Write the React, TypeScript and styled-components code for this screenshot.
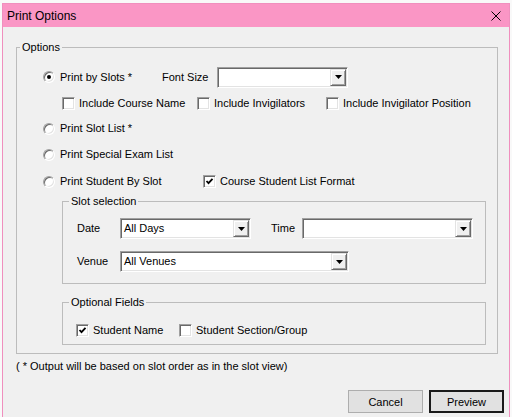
import styled, { createGlobalStyle, css } from "styled-components";

const GlobalStyle = createGlobalStyle`
  html, body {
    margin: 0;
    padding: 0;
  }
  body {
    background: #f9f9f9;
    font-family: "Liberation Sans", Arial, sans-serif;
    font-size: 11px;
    color: #000;
    overflow: hidden;
  }
`;

const Screen = styled.div`
  width: 512px;
  height: 417px;
  padding: 3px 0 0 2px;
  box-sizing: border-box;
  overflow: hidden;
`;

const Window = styled.div`
  width: 508px;
  height: 430px;
  box-sizing: border-box;
  border: 1px solid #f08fbe;
  border-bottom: none;
  background: #f0f0f0;
  display: flex;
  flex-direction: column;
`;

const TitleBar = styled.div`
  height: 23px;
  flex: none;
  background: #fa96c5;
  display: flex;
  align-items: center;
  justify-content: space-between;
  padding: 0 8px 0 4px;
  font-size: 12px;
`;

const CloseIcon = () => (
  <svg width="10" height="10" viewBox="0 0 10 10">
    <path d="M0.5 0.5 L9.5 9.5 M9.5 0.5 L0.5 9.5" stroke="#000" strokeWidth="1" fill="none" />
  </svg>
);

const Body = styled.div`
  padding: 14px 0 0 13px;
  display: flex;
  flex-direction: column;
`;

const GroupBox = styled.fieldset<{ $width?: number; $pl: number; $mt?: number }>`
  margin: ${(p) => p.$mt ?? 0}px 0 0 0;
  padding: 0 0 0 ${(p) => p.$pl}px;
  border: 1px solid #bcbcbc;
  min-width: 0;
  box-sizing: border-box;
  ${(p) =>
    p.$width &&
    css`
      width: ${p.$width}px;
    `}
`;

const Legend = styled.legend`
  padding: 0 2px;
  line-height: 13px;
`;

const GroupContent = styled.div<{ $pad: string }>`
  padding: ${(p) => p.$pad};
  display: flex;
  flex-direction: column;
`;

const Row = styled.div<{ $h: number; $indent?: number; $gap?: number }>`
  height: ${(p) => p.$h}px;
  padding-left: ${(p) => p.$indent ?? 0}px;
  margin-bottom: ${(p) => p.$gap ?? 0}px;
  display: flex;
  align-items: center;
`;

const Option = styled.label<{ $w?: number }>`
  display: flex;
  align-items: center;
  gap: 4px;
  line-height: 13px;
  white-space: nowrap;
  ${(p) =>
    p.$w &&
    css`
      width: ${p.$w}px;
      flex: none;
    `}
`;

const RadioCircle = styled.span<{ $on?: boolean }>`
  width: 12px;
  height: 12px;
  box-sizing: border-box;
  border-radius: 50%;
  border: 1px solid;
  border-color: #a0a0a0 #ffffff #ffffff #a0a0a0;
  box-shadow: inset 1px 1px 0 #696969, inset -1px -1px 0 #e3e3e3;
  background: #fff;
  display: flex;
  align-items: center;
  justify-content: center;
  margin-right: 1px;
  &::after {
    content: "";
    width: 4px;
    height: 4px;
    border-radius: 50%;
    background: ${(p) => (p.$on ? "#000" : "transparent")};
  }
`;

const CheckBox = styled.span`
  width: 13px;
  height: 13px;
  box-sizing: border-box;
  border: 1px solid;
  border-color: #a0a0a0 #ffffff #ffffff #a0a0a0;
  box-shadow: inset 1px 1px 0 #696969, inset -1px -1px 0 #e3e3e3;
  background: #fff;
  display: flex;
  align-items: center;
  justify-content: center;
`;

const Check = () => (
  <svg width="9" height="9" viewBox="0 0 9 9">
    <path d="M1.5 4 L3.5 6.2 L7.5 1.8" stroke="#000" strokeWidth="1.8" fill="none" />
  </svg>
);

const FieldLabel = styled.span<{ $w: number }>`
  width: ${(p) => p.$w}px;
  flex: none;
  line-height: 13px;
  white-space: nowrap;
`;

const ComboBox = styled.div<{ $w: number; $ml?: number }>`
  width: ${(p) => p.$w}px;
  height: 21px;
  margin-left: ${(p) => p.$ml ?? 0}px;
  flex: none;
  box-sizing: border-box;
  background: #fff;
  border: 1px solid;
  border-color: #a0a0a0 #ffffff #ffffff #a0a0a0;
  box-shadow: inset 1px 1px 0 #696969, inset -1px -1px 0 #e3e3e3;
  padding: 1px 1px 1px 3px;
  display: flex;
  align-items: center;
  justify-content: space-between;
`;

const ComboText = styled.span`
  line-height: 13px;
  white-space: nowrap;
`;

const DropButton = styled.span`
  width: 16px;
  height: 17px;
  box-sizing: border-box;
  background: #f0f0f0;
  border: 1px solid;
  border-color: #e3e3e3 #696969 #696969 #e3e3e3;
  box-shadow: inset 1px 1px 0 #ffffff, inset -1px -1px 0 #a0a0a0;
  display: flex;
  align-items: center;
  justify-content: center;
`;

const Arrow = () => (
  <svg width="7" height="4" viewBox="0 0 7 4">
    <polygon points="0,0 7,0 3.5,4" fill="#000" />
  </svg>
);

const Combo = ({ w, ml, value = "" }: { w: number; ml?: number; value?: string }) => (
  <ComboBox $w={w} $ml={ml}>
    <ComboText>{value}</ComboText>
    <DropButton>
      <Arrow />
    </DropButton>
  </ComboBox>
);

const Radio = ({ label, on, w }: { label: string; on?: boolean; w?: number }) => (
  <Option $w={w}>
    <RadioCircle $on={on} />
    {label}
  </Option>
);

const Checkbox = ({ label, on, w }: { label: string; on?: boolean; w?: number }) => (
  <Option $w={w}>
    <CheckBox>{on && <Check />}</CheckBox>
    {label}
  </Option>
);

const Footnote = styled.div`
  margin-top: 6px;
  line-height: 13px;
`;

const ButtonRow = styled.div`
  margin-top: 17px;
  padding-right: 5px;
  display: flex;
  justify-content: flex-end;
  gap: 6px;
`;

const PushButton = styled.button<{ $default?: boolean }>`
  width: 75px;
  height: 23px;
  padding: 0;
  box-sizing: border-box;
  background: #e1e1e1;
  border: 1px solid #adadad;
  font-family: "Liberation Sans", Arial, sans-serif;
  font-size: 11px;
  color: #000;
  ${(p) =>
    p.$default &&
    css`
      border: 2px solid #1a1a1a;
    `}
`;

export default function App() {
  return (
    <Screen>
      <GlobalStyle />
      <Window>
        <TitleBar>
          <span>Print Options</span>
          <CloseIcon />
        </TitleBar>
        <Body>
          <GroupBox $width={482} $pl={3}>
            <Legend>Options</Legend>
            <GroupContent $pad="10px 11px 8px 23px">
              <Row $h={26}>
                <Radio label="Print by Slots *" on w={119} />
                <FieldLabel $w={55}>Font Size</FieldLabel>
                <Combo w={131} />
              </Row>
              <Row $h={26} $indent={19}>
                <Checkbox label="Include Course Name" w={135} />
                <Checkbox label="Include Invigilators" w={129} />
                <Checkbox label="Include Invigilator Position" />
              </Row>
              <Row $h={25}>
                <Radio label="Print Slot List *" />
              </Row>
              <Row $h={27}>
                <Radio label="Print Special Exam List" />
              </Row>
              <Row $h={27}>
                <Radio label="Print Student By Slot" w={160} />
                <Checkbox label="Course Student List Format" on />
              </Row>
              <GroupBox $pl={6} style={{ marginLeft: 19 }}>
                <Legend>Slot selection</Legend>
                <GroupContent $pad="10px 0 11px 8px">
                  <Row $h={21} $gap={12}>
                    <FieldLabel $w={43}>Date</FieldLabel>
                    <Combo w={131} value="All Days" />
                    <FieldLabel $w={31} style={{ marginLeft: 20 }}>
                      Time
                    </FieldLabel>
                    <Combo w={171} />
                  </Row>
                  <Row $h={21}>
                    <FieldLabel $w={43}>Venue</FieldLabel>
                    <Combo w={229} value="All Venues" />
                  </Row>
                </GroupContent>
              </GroupBox>
              <GroupBox $pl={6} $mt={12} style={{ marginLeft: 19 }}>
                <Legend>Optional Fields</Legend>
                <GroupContent $pad="14px 0 7px 7px">
                  <Row $h={14}>
                    <Checkbox label="Student Name" on w={103} />
                    <Checkbox label="Student Section/Group" />
                  </Row>
                </GroupContent>
              </GroupBox>
            </GroupContent>
          </GroupBox>
          <Footnote>( * Output will be based on slot order as in the slot view)</Footnote>
          <ButtonRow>
            <PushButton>Cancel</PushButton>
            <PushButton $default>Preview</PushButton>
          </ButtonRow>
        </Body>
      </Window>
    </Screen>
  );
}
